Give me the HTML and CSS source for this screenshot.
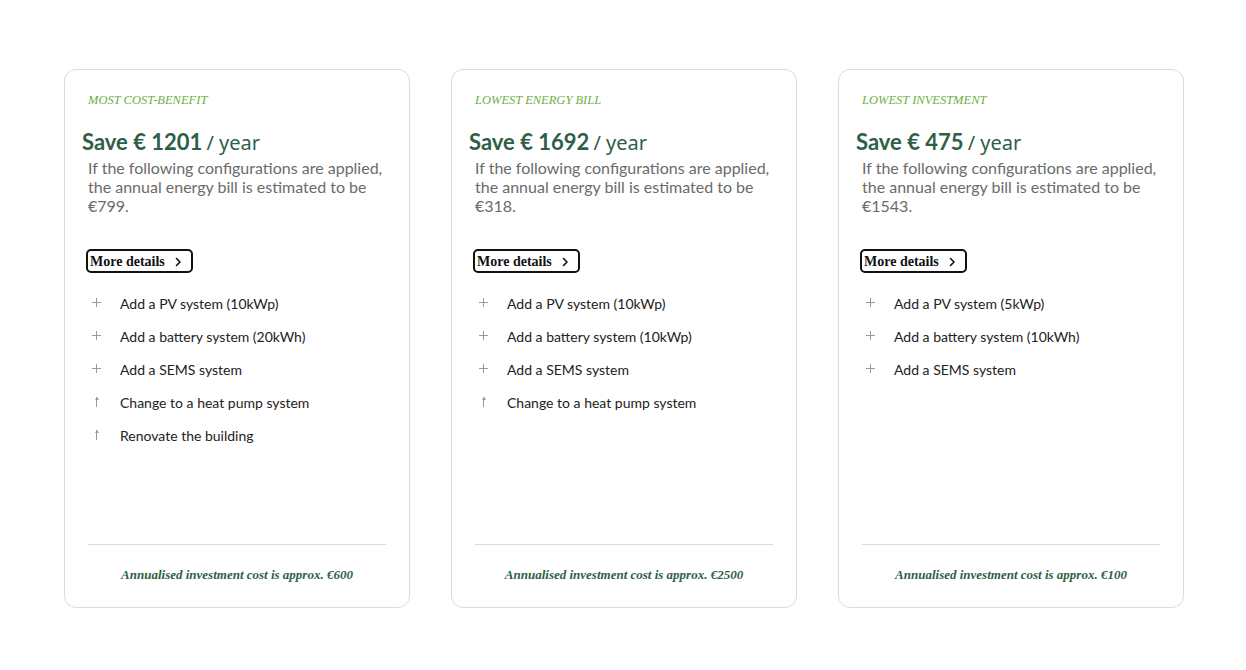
FILE: index.html
```html
<!DOCTYPE html>
<html>
<head>
<meta charset="utf-8">
<link rel="stylesheet" href="styles.css">
</head>
<body>
<div class="cards">
  <div class="card">
    <div class="label">MOST COST-BENEFIT</div>
    <div class="title"><span class="save">Save € 1201</span> <span class="per">/ year</span></div>
    <p class="desc">If the following configurations are applied, the annual energy bill is estimated to be €799.</p>
    <button class="btn">More details <svg width="10" height="10" viewBox="0 0 10 10"><path d="M3.5 1.5 L7 5 L3.5 8.5" fill="none" stroke="#111" stroke-width="1.6" stroke-linecap="round" stroke-linejoin="round"/></svg></button>
    <ul class="list">
      <li><span class="ic plus"></span>Add a PV system (10kWp)</li>
      <li><span class="ic plus"></span>Add a battery system (20kWh)</li>
      <li><span class="ic plus"></span>Add a SEMS system</li>
      <li><span class="ic up"></span>Change to a heat pump system</li>
      <li><span class="ic up"></span>Renovate the building</li>
    </ul>
    <div class="foot">Annualised investment cost is approx. €600</div>
  </div>
  <div class="card">
    <div class="label">LOWEST ENERGY BILL</div>
    <div class="title"><span class="save">Save € 1692</span> <span class="per">/ year</span></div>
    <p class="desc">If the following configurations are applied, the annual energy bill is estimated to be €318.</p>
    <button class="btn">More details <svg width="10" height="10" viewBox="0 0 10 10"><path d="M3.5 1.5 L7 5 L3.5 8.5" fill="none" stroke="#111" stroke-width="1.6" stroke-linecap="round" stroke-linejoin="round"/></svg></button>
    <ul class="list">
      <li><span class="ic plus"></span>Add a PV system (10kWp)</li>
      <li><span class="ic plus"></span>Add a battery system (10kWp)</li>
      <li><span class="ic plus"></span>Add a SEMS system</li>
      <li><span class="ic up"></span>Change to a heat pump system</li>
    </ul>
    <div class="foot">Annualised investment cost is approx. €2500</div>
  </div>
  <div class="card">
    <div class="label">LOWEST INVESTMENT</div>
    <div class="title"><span class="save">Save € 475</span> <span class="per">/ year</span></div>
    <p class="desc">If the following configurations are applied, the annual energy bill is estimated to be €1543.</p>
    <button class="btn">More details <svg width="10" height="10" viewBox="0 0 10 10"><path d="M3.5 1.5 L7 5 L3.5 8.5" fill="none" stroke="#111" stroke-width="1.6" stroke-linecap="round" stroke-linejoin="round"/></svg></button>
    <ul class="list">
      <li><span class="ic plus"></span>Add a PV system (5kWp)</li>
      <li><span class="ic plus"></span>Add a battery system (10kWh)</li>
      <li><span class="ic plus"></span>Add a SEMS system</li>
    </ul>
    <div class="foot">Annualised investment cost is approx. €100</div>
  </div>
</div>
</body>
</html>
```

FILE: styles.css
```css
* { box-sizing: border-box; }
html, body { margin: 0; padding: 0; background: #fff; }
body { font-family: Lato, "Noto Sans", sans-serif; }

.cards {
  display: flex;
  gap: 41px;
  padding: 69px 0 0 64px;
}

.card {
  width: 346px;
  height: 539px;
  border: 1px solid #dcdcdc;
  border-radius: 12px;
  padding: 23px 23px 0;
  display: flex;
  flex-direction: column;
}

.label {
  font-family: "Liberation Serif", serif;
  font-style: italic;
  font-weight: 400;
  font-size: 12.5px;
  line-height: 14px;
  color: #6db043;
}

.title {
  margin: 22px 0 0 -6px;
  line-height: 26px;
  color: #2f5e46;
  white-space: nowrap;
}
.save {
  font-family: Lato, sans-serif;
  font-weight: 700;
  font-size: 22px;
}
.per {
  font-family: "Noto Sans", sans-serif;
  font-weight: 400;
  font-size: 20px;
}

.desc {
  margin: 1px 0 0;
  font-size: 16px;
  line-height: 19px;
  color: #6b6b6b;
}

.btn {
  align-self: flex-start;
  margin: 34px 0 0 -2px;
  height: 24px;
  padding: 1px 8px 0 2px;
  border: 2px solid #111;
  border-radius: 5px;
  background: #fff;
  font-family: "Liberation Serif", serif;
  font-weight: 700;
  font-size: 14px;
  color: #111;
  display: flex;
  align-items: center;
  gap: 8px;
}

.list {
  list-style: none;
  margin: 22px 0 0;
  padding: 0;
  display: flex;
  flex-direction: column;
  gap: 16px;
}
.list li {
  display: flex;
  align-items: center;
  font-size: 14px;
  line-height: 17px;
  color: #222;
}
.ic {
  width: 32px;
  height: 17px;
  position: relative;
  flex: none;
}
.ic.plus::before, .ic.plus::after {
  content: "";
  position: absolute;
  background: #999;
}
.ic.plus::before { left: 4px; top: 7px; width: 9px; height: 1px; }
.ic.plus::after { left: 8px; top: 3px; width: 1px; height: 9px; }
.ic.up::before {
  content: "";
  position: absolute;
  left: 8px; top: 3px; width: 1px; height: 10px;
  background: #999;
}
.ic.up::after {
  content: "";
  position: absolute;
  left: 6.5px; top: 3px;
  border-left: 2px solid transparent;
  border-right: 2px solid transparent;
  border-bottom: 3px solid #999;
}

.foot {
  margin-top: auto;
  border-top: 1px solid #dcdcdc;
  padding: 23px 0 25px;
  text-align: center;
  font-family: "Liberation Serif", serif;
  font-style: italic;
  font-weight: 700;
  font-size: 13px;
  line-height: 14px;
  color: #2f5e46;
}
```
